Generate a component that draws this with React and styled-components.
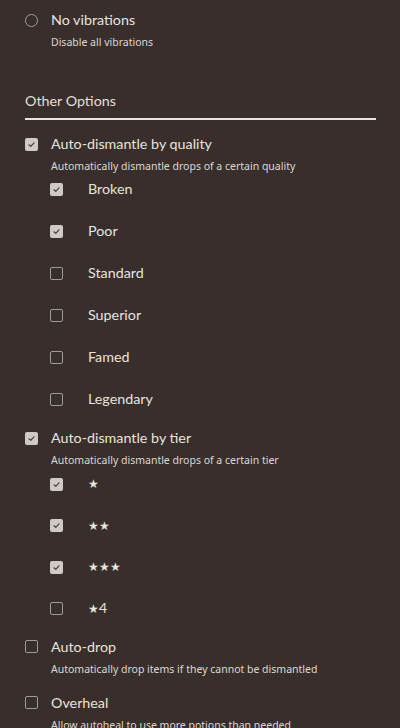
import React from "react";
import styled, { createGlobalStyle } from "styled-components";

const GlobalStyle = createGlobalStyle`
  html, body {
    margin: 0;
    padding: 0;
    background: #382f2c;
  }
  body {
    font-family: "Noto Sans", "Open Sans", sans-serif;
    color: #e6e1dc;
  }
`;

const Page = styled.div`
  display: flex;
  flex-direction: column;
  padding: 10px 24px 0 25px;
  height: 728px;
  box-sizing: border-box;
  overflow: hidden;
  & > * {
    flex-shrink: 0;
  }
`;

const Row = styled.div`
  display: flex;
  align-items: center;
  height: 20px;
  gap: ${(p) => (p.$sub ? "25px" : "13px")};
  padding-left: ${(p) => (p.$sub ? "25px" : "0")};
`;

const Label = styled.span`
  font-family: Lato, "Noto Sans", sans-serif;
  font-size: ${(p) => (p.$star ? "12px" : "14.3px")};
  line-height: 20px;
  color: #e8e3de;
  white-space: nowrap;
`;

const Digit = styled.span`
  font-size: 14px;
`;

const Desc = styled.div`
  margin-top: 4px;
  padding-left: 26px;
  font-size: 10.5px;
  line-height: 16px;
  color: #ddd8d3;
  white-space: nowrap;
`;

const Item = styled.div`
  display: flex;
  flex-direction: column;
  margin-top: ${(p) => p.$mt || "16px"};
`;

const SubList = styled.div`
  display: flex;
  flex-direction: column;
  gap: ${(p) => p.$gap};
  margin-top: ${(p) => p.$mt};
  margin-bottom: ${(p) => p.$mb || "3px"};
`;

const SectionTitle = styled.div`
  margin-top: 41px;
  font-family: Lato, "Noto Sans", sans-serif;
  font-size: 14.3px;
  line-height: 20px;
  color: #e4dfda;
`;

const Divider = styled.div`
  margin-top: 7px;
  height: 2px;
  flex: none;
  background: #e8e4df;
`;

const Radio = styled.span`
  width: 11px;
  height: 11px;
  border: 1.5px solid #a49e99;
  border-radius: 50%;
  flex: none;
`;

const Box = styled.span`
  width: 13px;
  height: 13px;
  box-sizing: border-box;
  border-radius: 2px;
  flex: none;
  display: flex;
  align-items: center;
  justify-content: center;
  background: ${(p) => (p.$checked ? "#cfcac5" : "transparent")};
  border: ${(p) => (p.$checked ? "none" : "1.5px solid #a19b96")};
`;

function Check({ checked }) {
  return (
    <Box $checked={checked}>
      {checked && (
        <svg width="9" height="9" viewBox="0 0 9 9">
          <polyline
            points="2,4.8 3.8,6.4 7,2.8"
            fill="none"
            stroke="#4a423e"
            strokeWidth="1.2"
            strokeLinecap="round"
            strokeLinejoin="round"
          />
        </svg>
      )}
    </Box>
  );
}

const quality = [
  ["Broken", true],
  ["Poor", true],
  ["Standard", false],
  ["Superior", false],
  ["Famed", false],
  ["Legendary", false],
];

const tiers = [
  ["★", true],
  ["★★", true],
  ["★★★", true],
  ["★4", false],
];

export default function App() {
  return (
    <>
      <GlobalStyle />
      <Page>
        <Item $mt="0">
          <Row>
            <Radio />
            <Label>No vibrations</Label>
          </Row>
          <Desc>Disable all vibrations</Desc>
        </Item>

        <SectionTitle>Other Options</SectionTitle>
        <Divider />

        <Item $mt="14px">
          <Row>
            <Check checked />
            <Label>Auto-dismantle by quality</Label>
          </Row>
          <Desc>Automatically dismantle drops of a certain quality</Desc>
          <SubList $gap="22px" $mt="5px">
            {quality.map(([name, on]) => (
              <Row $sub key={name}>
                <Check checked={on} />
                <Label>{name}</Label>
              </Row>
            ))}
          </SubList>
        </Item>

        <Item>
          <Row>
            <Check checked />
            <Label>Auto-dismantle by tier</Label>
          </Row>
          <Desc>Automatically dismantle drops of a certain tier</Desc>
          <SubList $gap="21.5px" $mt="6px" $mb="2px">
            {tiers.map(([name, on]) => (
              <Row $sub key={name}>
                <Check checked={on} />
                <Label $star>
                  {name === "★4" ? (
                    <>
                      ★<Digit>4</Digit>
                    </>
                  ) : (
                    name
                  )}
                </Label>
              </Row>
            ))}
          </SubList>
        </Item>

        <Item>
          <Row>
            <Check />
            <Label>Auto-drop</Label>
          </Row>
          <Desc>Automatically drop items if they cannot be dismantled</Desc>
        </Item>

        <Item>
          <Row>
            <Check />
            <Label>Overheal</Label>
          </Row>
          <Desc>Allow autoheal to use more potions than needed</Desc>
        </Item>
      </Page>
    </>
  );
}
